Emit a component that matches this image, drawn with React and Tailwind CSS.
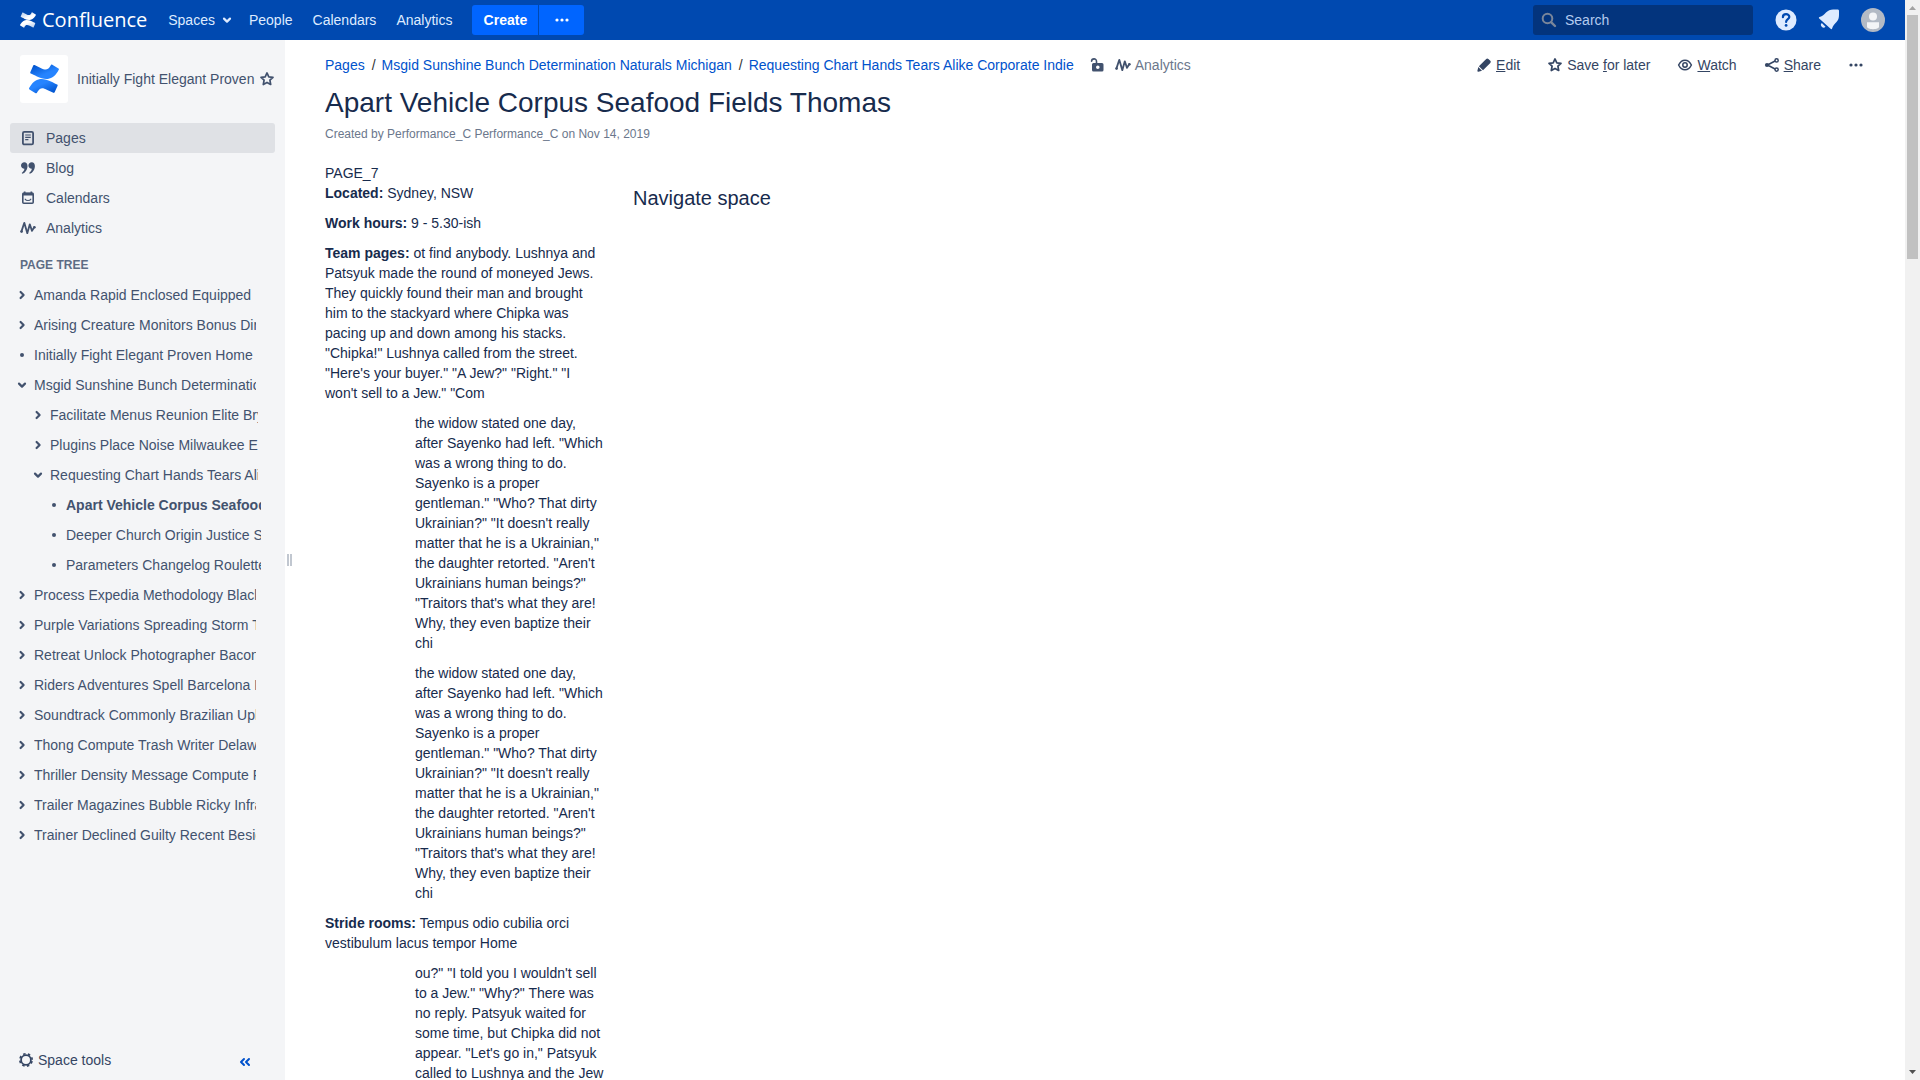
import React from "react";

function Svg({ size = 16, className = "", children }) {
  return (
    <svg width={size} height={size} viewBox="0 0 16 16" fill="none" aria-hidden="true" className={`shrink-0 ${className}`}>
      {children}
    </svg>
  );
}

const ChevronDown = ({ className }) => (
  <Svg className={className}>
    <path d="M5 6.600 8 9.600l3-3" stroke="currentColor" strokeWidth="2.200" strokeLinecap="round" strokeLinejoin="round" />
  </Svg>
);

const ChevronRight = ({ className }) => (
  <Svg className={className}>
    <path d="m6.600 5 3 3-3 3" stroke="currentColor" strokeWidth="2.200" strokeLinecap="round" strokeLinejoin="round" />
  </Svg>
);

const Bullet = ({ className }) => (
  <Svg className={className}>
    <circle cx="8" cy="8" r="2" fill="currentColor" />
  </Svg>
);

const Dots = () => (
  <Svg>
    <circle cx="3" cy="8" r="1.600" fill="currentColor" />
    <circle cx="8" cy="8" r="1.600" fill="currentColor" />
    <circle cx="13" cy="8" r="1.600" fill="currentColor" />
  </Svg>
);

const Star = () => (
  <Svg>
    <path
      d="m8 1.900 1.800 3.900 4.200.5-3.100 2.900.8 4.300L8 11.400l-3.700 2.100.8-4.300L2 6.300l4.200-.5z"
      stroke="currentColor"
      strokeWidth="1.700"
      strokeLinejoin="round"
    />
  </Svg>
);

const Pulse = ({ className }) => (
  <Svg className={className}>
    <path
      d="M1.400 11.600 4.300 2.800l3 10.400 2.500-8.900L12 10.900l2.200-3.700"
      stroke="currentColor"
      strokeWidth="1.800"
      strokeLinecap="round"
      strokeLinejoin="round"
    />
    <circle cx="1.600" cy="11.500" r="1.300" fill="currentColor" />
    <circle cx="14.400" cy="7.200" r="1.300" fill="currentColor" />
  </Svg>
);

const PageIcon = () => (
  <Svg>
    <rect x="2.900" y="1.800" width="10.200" height="12.600" rx="1.400" stroke="currentColor" strokeWidth="1.800" />
    <path d="M5.200 5h5.600M5.200 7.300h5.600M5.200 9.600h3.200" stroke="currentColor" strokeWidth="1.200" />
  </Svg>
);

const QuoteIcon = () => (
  <Svg>
    <path
      d="M4.300 2.200c2 0 3.200 1.500 3.200 3.700 0 3.600-2.100 6.700-5 7.900l-.8-.9c1.600-1.100 2.600-2.600 2.700-4.200C2.500 8.700 1 7.400 1 5.500c0-1.900 1.500-3.300 3.300-3.300zM11.700 2.200c2 0 3.200 1.500 3.200 3.700 0 3.600-2.100 6.700-5 7.900l-.8-.9c1.600-1.100 2.600-2.600 2.700-4.200-1.900 0-3.400-1.300-3.400-3.200 0-1.900 1.500-3.300 3.300-3.300z"
      fill="currentColor"
    />
  </Svg>
);

const CalendarIcon = () => (
  <Svg>
    <rect x="2.800" y="3.400" width="10.400" height="9.900" rx="1" stroke="currentColor" strokeWidth="1.600" />
    <path d="M2.600 2.800h10.800v2.800H2.600zM3.800 1.600h1.700V4H3.800zM10.500 1.600h1.700V4h-1.700z" fill="currentColor" />
    <path d="M5.200 9.200c1 1.700 4.600 1.700 5.600 0" stroke="currentColor" strokeWidth="1.200" strokeLinecap="round" />
  </Svg>
);

const GearIcon = () => (
  <Svg>
    <circle cx="8" cy="8" r="4.900" stroke="currentColor" strokeWidth="1.800" />
    <circle cx="8" cy="8" r="6.200" stroke="currentColor" strokeWidth="1.600" strokeDasharray="2.435 2.435" strokeDashoffset="-1.217" />
  </Svg>
);

const CollapseIcon = () => (
  <Svg>
    <path d="M7 5 4 8l3 3M12 5 9 8l3 3" stroke="currentColor" strokeWidth="2" strokeLinecap="round" strokeLinejoin="round" />
  </Svg>
);

const UnlockIcon = () => (
  <Svg>
    <path d="M2.600 4.200c0-3 4.900-3.200 4.900.2V7" stroke="currentColor" strokeWidth="1.600" strokeLinecap="round" />
    <path
      fillRule="evenodd"
      d="M4.500 6H13a1.500 1.500 0 0 1 1.500 1.500V13a1.500 1.500 0 0 1-1.500 1.500H4.500A1.500 1.500 0 0 1 3 13V7.500A1.500 1.500 0 0 1 4.500 6zm4.300 2.400a1.800 1.800 0 1 0 0 3.600 1.800 1.800 0 0 0 0-3.600z"
      fill="currentColor"
    />
  </Svg>
);

const PencilIcon = () => (
  <Svg>
    <path
      d="M10.200 1.900a1.600 1.600 0 0 1 2.200 0l1.900 1.900a1.600 1.600 0 0 1 0 2.200l-7.300 7.300-4.100-4.100zM2.300 10l3.700 3.700-3.700 1c-.6.100-1-.3-.9-.9z"
      fill="currentColor"
    />
  </Svg>
);

const EyeIcon = () => (
  <Svg>
    <path d="M1.600 8c3.200-6.400 9.600-6.400 12.800 0-3.200 6.400-9.600 6.400-12.800 0z" stroke="currentColor" strokeWidth="1.500" strokeLinejoin="round" />
    <circle cx="8" cy="8" r="2.200" stroke="currentColor" strokeWidth="1.500" />
  </Svg>
);

const ShareIcon = () => (
  <Svg>
    <path d="m3.500 8 8.500-4.500M3.500 8l8.500 4.500" stroke="currentColor" strokeWidth="1.500" />
    <circle cx="3" cy="8" r="2.100" fill="currentColor" />
    <circle cx="12.600" cy="3.400" r="1.600" fill="white" stroke="currentColor" strokeWidth="1.500" />
    <circle cx="12.600" cy="12.600" r="1.600" fill="white" stroke="currentColor" strokeWidth="1.500" />
  </Svg>
);

function ConfluenceMark({ size, id, light, dark }) {
  return (
    <svg width={size} height={size} viewBox="0 0 256 246" aria-hidden="true" className="shrink-0">
      <defs>
        <linearGradient id={`${id}-lower`} x1="1" y1="1" x2="0.3" y2="0.2">
          <stop offset="0.1" stopColor={dark} />
          <stop offset="0.8" stopColor={light} />
        </linearGradient>
        <linearGradient id={`${id}-upper`} x1="0" y1="0" x2="0.7" y2="0.8">
          <stop offset="0.1" stopColor={dark} />
          <stop offset="0.8" stopColor={light} />
        </linearGradient>
      </defs>
      <path
        fill={`url(#${id}-lower)`}
        d="M9.260 187.330c-2.640 4.307-5.607 9.305-8.127 13.287-2.255 3.811-1.046 8.726 2.720 11.054l52.823 32.507c1.855 1.145 4.092 1.493 6.209.966 2.117-.527 3.935-1.885 5.045-3.766 2.113-3.535 4.835-8.127 7.802-13.043 20.926-34.539 41.974-30.313 79.925-12.190l52.376 24.908c1.971.938 4.237 1.038 6.284.276 2.047-.762 3.699-2.321 4.580-4.321l25.151-56.886c1.777-4.062-.017-8.798-4.063-10.605-11.052-5.201-33.034-15.562-52.822-25.111C115.978 109.773 55.482 112.089 9.260 187.330z"
      />
      <path
        fill={`url(#${id}-upper)`}
        d="M246.115 58.232c2.641-4.307 5.607-9.305 8.127-13.288 2.255-3.811 1.046-8.726-2.721-11.054L198.699 1.384c-1.868-1.262-4.175-1.697-6.376-1.203-2.201.494-4.100 1.873-5.245 3.804-2.113 3.535-4.835 8.127-7.802 13.043-20.926 34.539-41.975 30.313-79.925 12.190L47.137 4.431c-1.971-.939-4.237-1.038-6.285-.276-2.047.762-3.698 2.321-4.579 4.321L11.122 65.363c-1.778 4.062.037 8.798 4.083 10.605 11.052 5.201 33.034 15.562 52.822 25.111 71.351 34.498 131.848 32.100 178.088-42.847z"
      />
    </svg>
  );
}

const HelpIcon = () => (
  <svg width="22" height="22" viewBox="0 0 22 22" fill="none" aria-hidden="true">
    <circle cx="11" cy="11" r="10.500" fill="#DEEBFF" />
    <path d="M7.900 8.200c0-4 6.400-4 6.400-.2 0 2.200-3.200 2.300-3.200 5" stroke="#0049B0" strokeWidth="2.200" strokeLinecap="round" />
    <circle cx="11.100" cy="16.400" r="1.400" fill="#0049B0" />
  </svg>
);

const BellIcon = () => (
  <svg width="22" height="22" viewBox="0 0 22 22" fill="none" aria-hidden="true">
    <path
      d="M19.500.5c1 0 1.500.5 1.500 1.500v4c0 3-.7 5-2.500 7-2 2.200-3.600 3.500-4.300 6.300-.2 1-1 1.100-1.600.5L1.200 9.600c-.6-.6-.4-1.400.4-1.600C4.600 7.300 6 5.500 8 3.600 10.200 1.500 12.200.8 15.200.6z"
      fill="#DEEBFF"
    />
    <path d="M3.800 14a2.300 2.300 0 1 0 3.700 3.800z" fill="#DEEBFF" />
  </svg>
);

const AvatarIcon = () => (
  <svg width="24" height="24" viewBox="0 0 24 24" aria-hidden="true">
    <circle cx="12" cy="12" r="12" fill="#B3BAC5" />
    <circle cx="12" cy="8.500" r="4" fill="#F4F5F7" />
    <path d="M6 14.200h12v4.600c0 1.200-2.600 2.400-6 2.400s-6-1.200-6-2.400z" fill="#F4F5F7" />
  </svg>
);

function Header() {
  const nav = ["People", "Calendars", "Analytics"];
  return (
    <header className="flex h-10 shrink-0 items-center bg-[#0049B0] px-5 text-[#DEEBFF]">
      <a href="#home" className="flex items-center gap-1.5 text-white">
        <ConfluenceMark size={16} id="brand" light="#FFFFFF" dark="#B9CFEE" />
        <span className="font-['Open_Sans',sans-serif] text-[20px] leading-7 font-medium">Confluence</span>
      </a>
      <nav className="ml-[21px] flex items-center gap-5">
        <button type="button" className="-mr-1.5 flex items-center gap-1">
          Spaces
          <ChevronDown />
        </button>
        {nav.map((n) => (
          <a key={n} href={`#${n.toLowerCase()}`}>{n}</a>
        ))}
      </nav>
      <div className="ml-5 flex gap-px font-bold text-white">
        <button type="button" className="h-[30px] w-[66px] rounded-l-[3px] bg-[#0065FF]">Create</button>
        <button type="button" aria-label="More" className="flex h-[30px] w-[45px] items-center justify-center rounded-r-[3px] bg-[#0065FF]">
          <Dots />
        </button>
      </div>
      <label className="ml-auto flex h-[30px] w-[220px] items-center gap-2 rounded-[3px] bg-[#03347D] px-2">
        <Svg className="text-[#7A869A]">
          <circle cx="6.500" cy="6.500" r="4.800" stroke="currentColor" strokeWidth="2" />
          <path d="m10.300 10.300 3.700 3.700" stroke="currentColor" strokeWidth="2.400" strokeLinecap="round" />
        </Svg>
        <input
          type="text"
          aria-label="Search"
          placeholder="Search"
          className="w-full min-w-0 bg-transparent outline-none placeholder:text-[#B3CBEF]"
        />
      </label>
      <div className="ml-[22px] flex items-center gap-[21px]">
        <button type="button" aria-label="Help"><HelpIcon /></button>
        <button type="button" aria-label="Notifications"><BellIcon /></button>
        <button type="button" aria-label="Profile"><AvatarIcon /></button>
      </div>
    </header>
  );
}

const tree = [
  { t: "Amanda Rapid Enclosed Equipped", k: "closed" },
  { t: "Arising Creature Monitors Bonus Directory", k: "closed" },
  { t: "Initially Fight Elegant Proven Home", k: "leaf" },
  {
    t: "Msgid Sunshine Bunch Determination Naturals Michigan",
    k: "open",
    c: [
      { t: "Facilitate Menus Reunion Elite Bryan", k: "closed" },
      { t: "Plugins Place Noise Milwaukee Elite", k: "closed" },
      {
        t: "Requesting Chart Hands Tears Alike Corporate Indie",
        k: "open",
        c: [
          { t: "Apart Vehicle Corpus Seafood Fields Thomas", k: "leaf", active: true },
          { t: "Deeper Church Origin Justice Spell", k: "leaf" },
          { t: "Parameters Changelog Roulette", k: "leaf" },
        ],
      },
    ],
  },
  { t: "Process Expedia Methodology Black", k: "closed" },
  { t: "Purple Variations Spreading Storm Trash", k: "closed" },
  { t: "Retreat Unlock Photographer Bacon", k: "closed" },
  { t: "Riders Adventures Spell Barcelona Fields", k: "closed" },
  { t: "Soundtrack Commonly Brazilian Upload", k: "closed" },
  { t: "Thong Compute Trash Writer Delaware", k: "closed" },
  { t: "Thriller Density Message Compute Fields", k: "closed" },
  { t: "Trailer Magazines Bubble Ricky Infrared", k: "closed" },
  { t: "Trainer Declined Guilty Recent Beside", k: "closed" },
];

function Marker({ kind }) {
  if (kind === "leaf") return <Bullet />;
  return (
    <button type="button" aria-label={kind === "open" ? "Collapse" : "Expand"} className="shrink-0">
      {kind === "open" ? <ChevronDown /> : <ChevronRight />}
    </button>
  );
}

function TreeList({ items, className, depth = 0 }) {
  return (
    <ul className={className}>
      {items.map((n) => (
        <li key={n.t}>
          <div className="flex h-[30px] items-center gap-1">
            <Marker kind={n.k} />
            <a href="#page" className={`min-w-0 flex-1 overflow-hidden whitespace-nowrap ${n.active ? "font-bold" : ""}`}>{n.t}</a>
          </div>
          {n.c && <TreeList items={n.c} depth={depth + 1} className={depth === 0 ? "-mr-[2px] pl-4" : "-mr-[3px] pl-4"} />}
        </li>
      ))}
    </ul>
  );
}

function Sidebar() {
  const links = [
    ["Pages", PageIcon],
    ["Blog", QuoteIcon],
    ["Calendars", CalendarIcon],
    ["Analytics", Pulse],
  ];
  return (
    <aside className="flex w-[285px] shrink-0 flex-col bg-[#F4F5F7] text-[#42526E]">
      <div className="flex items-center pt-[15px] pl-5">
        <span className="flex size-12 items-center justify-center rounded-[3px] bg-white">
          <ConfluenceMark size={30} id="space" light="#2684FF" dark="#0052CC" />
        </span>
        <a href="#space" className="ml-[9px] whitespace-nowrap">Initially Fight Elegant Proven</a>
        <button type="button" aria-label="Favourite space" className="ml-[5px]"><Star /></button>
      </div>
      <ul className="mt-5 px-2.5">
        {links.map(([label, Icon], i) => (
          <li key={label}>
            <a href={`#${label.toLowerCase()}`} className={`flex h-[30px] items-center gap-2.5 rounded-[3px] px-2.5 ${i === 0 ? "bg-[#DFE1E5]" : ""}`}>
              <Icon />
              {label}
            </a>
          </li>
        ))}
      </ul>
      <h2 className="mt-3 pl-5 text-[12px] leading-5 font-bold text-[#5E6C84] uppercase">Page tree</h2>
      <TreeList items={tree} className="mt-[5px] mr-[29px] pl-3.5" />
      <div className="mt-auto flex h-10 items-center justify-between pr-8 pl-[18px] text-[#344563]">
        <button type="button" className="flex items-center gap-1"><GearIcon />Space tools</button>
        <button type="button" aria-label="Collapse sidebar" className="pt-1 text-[#0052CC]"><CollapseIcon /></button>
      </div>
    </aside>
  );
}

const widow =
  "the widow stated one day, after Sayenko had left. \"Which was a wrong thing to do. Sayenko is a proper gentleman.\" \"Who? That dirty Ukrainian?\" \"It doesn't really matter that he is a Ukrainian,\" the daughter retorted. \"Aren't Ukrainians human beings?\" \"Traitors that's what they are! Why, they even baptize their chi";

function Content() {
  return (
    <main className="min-w-0 flex-1 overflow-hidden bg-white pt-[15px] pr-[41px] pl-8 text-[#172B4D]">
      <div className="flex items-center justify-between">
        <div className="flex items-center text-[#6B778C]">
          <ol className="flex items-center text-[#0052CC]">
            <li><a href="#pages">Pages</a></li>
            <li><span className="pr-1.5 pl-[7px] text-[#333333]">/</span><a href="#msgid">Msgid Sunshine Bunch Determination Naturals Michigan</a></li>
            <li><span className="pr-1.5 pl-[7px] text-[#333333]">/</span><a href="#requesting">Requesting Chart Hands Tears Alike Corporate Indie</a></li>
          </ol>
          <button type="button" aria-label="Restrictions" className="ml-[15px] text-[#42526E]"><UnlockIcon /></button>
          <a href="#analytics" className="ml-2.5 flex items-center gap-1"><Pulse className="text-[#42526E]" />Analytics</a>
        </div>
        <div className="flex items-center gap-[27px] text-[#344563]">
          <button type="button" className="flex items-center gap-1"><PencilIcon /><span><u>E</u>dit</span></button>
          <button type="button" className="flex items-center gap-1"><Star /><span>Save <u>f</u>or later</span></button>
          <button type="button" className="flex items-center gap-1"><EyeIcon /><span><u>W</u>atch</span></button>
          <button type="button" className="flex items-center gap-1"><ShareIcon /><span><u>S</u>hare</span></button>
          <button type="button" aria-label="More actions"><Dots /></button>
        </div>
      </div>
      <h1 className="mt-3 text-[28px] leading-8">Apart Vehicle Corpus Seafood Fields Thomas</h1>
      <p className="mt-1.5 text-[12px] leading-[18px] text-[#6B778C]">Created by Performance_C Performance_C on Nov 14, 2019</p>
      <div className="mt-5 flex gap-7">
        <div className="flex w-[280px] shrink-0 flex-col gap-2.5">
          <p>PAGE_7<br /><b>Located:</b> Sydney, NSW</p>
          <p><b>Work hours:</b> 9 - 5.30-ish</p>
          <p>
            <b>Team pages:</b> ot find anybody. Lushnya and Patsyuk made the round of moneyed Jews. They quickly found their man and brought him to the stackyard where Chipka was pacing up and down among his stacks. "Chipka!" Lushnya called from the street. "Here's your buyer." "A Jew?" "Right." "I won't sell to a Jew." "Com
          </p>
          <p className="pl-[90px]">{widow}</p>
          <p className="pl-[90px]">{widow}</p>
          <p><b>Stride rooms:</b> Tempus odio cubilia orci vestibulum lacus tempor Home</p>
          <p className="pl-[90px]">
            ou?" "I told you I wouldn't sell to a Jew." "Why?" There was no reply. Patsyuk waited for some time, but Chipka did not appear. "Let's go in," Patsyuk called to Lushnya and the Jew
          </p>
        </div>
        <h2 className="mt-[23px] text-[20px] leading-6">Navigate space</h2>
      </div>
    </main>
  );
}

function Scrollbar() {
  return (
    <div className="flex w-[15px] shrink-0 flex-col items-center bg-[#F1F1F1]" aria-hidden="true">
      <svg width="15" height="15" viewBox="0 0 15 15"><path d="M4 10h7L7.500 6z" fill="#A3A3A3" /></svg>
      <div className="h-[244px] w-[11px] bg-[#C1C1C1]" />
      <svg width="15" height="15" viewBox="0 0 15 15" className="mt-auto"><path d="M4 5h7L7.500 9z" fill="#505050" /></svg>
    </div>
  );
}

export default function App() {
  return (
    <div className="flex h-screen overflow-hidden bg-white font-['Liberation_Sans',Arial,sans-serif] text-[14px] leading-5">
      <div className="flex min-w-0 flex-1 flex-col">
        <Header />
        <div className="flex min-h-0 flex-1">
          <Sidebar />
          <div className="flex w-2 shrink-0 items-center justify-center gap-px" role="separator">
            <span className="h-3 w-0.5 bg-[#C1C7D0]" />
            <span className="h-3 w-0.5 bg-[#C1C7D0]" />
          </div>
          <Content />
        </div>
      </div>
      <Scrollbar />
    </div>
  );
}
